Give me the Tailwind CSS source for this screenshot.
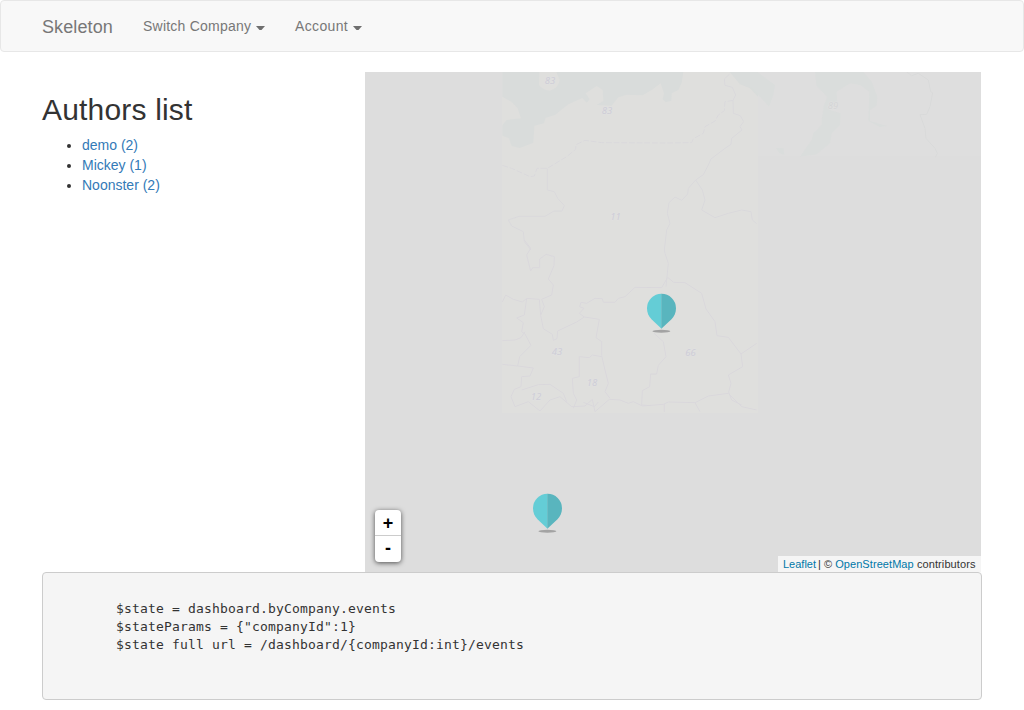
<!DOCTYPE html>
<html lang="en">
<head>
<meta charset="utf-8">
<title>Skeleton</title>
<script src="https://cdn.jsdelivr.net/npm/@tailwindcss/browser@4"></script>
</head>
<body class="h-[710px] overflow-hidden bg-white font-['Liberation_Sans',Arial,sans-serif] text-sm leading-5 text-[#333]">
<nav class="flex h-[52px] items-center rounded border border-[#e7e7e7] bg-[#f8f8f8] pl-[41px] text-[#777]">
  <a class="w-[101px] pt-0.5 text-lg tracking-[0.1px] whitespace-nowrap">Skeleton</a>
  <a class="flex w-[152px] items-center whitespace-nowrap"><span class="tracking-[0.22px]">Switch Company</span><svg class="mt-1 ml-[5px] h-[5px] w-[9px]" viewBox="0 0 9 5"><path d="M0 0H9L5.500 4H3.500Z" fill="#6f6f6f"/></svg></a>
  <a class="flex items-center whitespace-nowrap"><span class="tracking-[0.35px]">Account</span><svg class="mt-1 ml-[5px] h-[5px] w-[9px]" viewBox="0 0 9 5"><path d="M0 0H9L5.500 4H3.500Z" fill="#6f6f6f"/></svg></a>
</nav>
<main class="mx-[42px] mt-5 w-[940px]">
  <div class="flex">
    <section class="w-[323px]">
      <h1 class="mt-5 mb-2 text-[30px] leading-[35px] tracking-[0.18px] whitespace-nowrap">Authors list</h1>
      <ul class="list-disc pl-10 text-[#333]">
        <li><a class="text-[#337ab7]">demo (2)</a></li>
        <li><a class="text-[#337ab7]">Mickey (1)</a></li>
        <li><a class="text-[#337ab7]">Noonster (2)</a></li>
      </ul>
    </section>
    <section class="relative h-[500px] w-[616px] overflow-hidden bg-[#ddd]">
      <svg class="block h-[500px] w-[616px]" viewBox="365 72 616 500">
        <rect x="757" y="72" width="224" height="84.500" fill="#dedede"/>
        <rect x="502" y="72" width="256" height="341" fill="#dfdfdd"/>
        <g transform="translate(495 70) scale(.33333)" fill="none" stroke="#dad9dc" stroke-width="3" stroke-linejoin="round">
          <path fill="#d9dcdb" stroke="none" d="M22 6H133L132 45Q145 62 165 62Q190 55 194 30L184 6H565L560 38L550 60L530 70L529 92L512 97L503 88L507 70L497 40L470 60L443 76L395 74L370 82L350 107L305 105L325 93L323 60L305 48L272 70L284 88L275 98L262 84L220 103L180 135L152 143L147 160L118 167L115 218L75 234L50 228L42 205L22 197V166L35 150L78 145L68 115L50 96L22 80Z"/>
          <path fill="#d9dcdb" stroke="none" d="M704 6H789V80L765 55L735 43Z"/>
          <path d="M22 286L50 295L105 320L118 318L126 295H157L215 260L242 238L243 224L270 211L320 218L515 219L590 218L595 206L625 190L630 170L660 153L670 135L688 122L690 95L716 91" stroke-dasharray="18 5"/>
          <path d="M704 12L688 27L690 46L712 52L722 75L714 91L715 130L736 137L746 155L735 170L741 180L710 205L708 223L690 235L648 267L640 285L625 314L602 330L580 355L578 372L560 391L540 381L522 398L517 430L525 460L515 480L508 540L510 550L520 580L513 650"/>
          <path d="M602 330L622 360L630 390L620 420L660 443L700 430L740 420L768 425L772 450L785 461M157 295V360L178 365L188 385L208 407L201 423L177 423L150 439L72 439L40 450L50 468L85 485L88 515L108 540"/>
        </g>
        <g transform="translate(495 240) scale(.33333)" fill="none" stroke="#dad8dc" stroke-width="3" stroke-linejoin="round">
          <path d="M88 0L107 25L95 45L107 93L113 83H134V57L153 43L178 50L177 77L160 117L175 135L170 165L140 178L148 200L137 226L145 266L172 283L175 301L186 296L188 273L245 246L268 231L253 220L267 205L254 200L258 187L275 190L300 175L322 176L325 187H360L370 175L390 170L420 142L500 143L518 112L536 127L570 128L620 160L633 207L660 245L666 287L700 292L738 342L785 310"/>
          <path d="M22 186L32 165L55 178L82 186L95 175L133 178L137 226M95 175L88 225L65 234L85 248L80 275L90 282L108 316L74 350L68 378L22 373M90 275L78 293L60 300L22 302M68 378L115 384L105 408L80 410L78 440L58 448L48 470L60 500L100 485L135 513L165 480L195 470L230 500L270 498L292 478L300 515L343 478L375 480L400 490L415 485L442 498L505 493L520 486L600 488L640 468L700 460L740 500L785 510"/>
          <path d="M268 231L313 238L303 293L320 305L320 347L330 390L340 430L330 455L345 475M320 350L292 345L283 353L253 350L253 410L232 415L235 460L245 480L235 505M80 450L130 434L165 433L205 460L215 485M477 280L505 305L513 350L490 376L485 402L467 402L464 440L442 452L440 495L468 497M508 492V516M738 342L743 380L700 405L708 430L701 456L710 480L740 495M600 488L615 515M265 487L298 500L310 486"/>
        </g>
        <g transform="translate(750 70) scale(.33333)" fill="none" stroke="#d9dada" stroke-width="3">
          <path fill="#dadddc" stroke="none" d="M0 6H22L75 45L70 75L57 110L30 80L0 50ZM195 6H340L365 35L382 80L380 107L360 120V153L410 168L390 171L355 153L358 65L330 45L300 40L260 65L262 98L240 120L272 130L270 165L245 190L240 220L200 253L150 260L185 210L190 190L215 165V150L222 105L232 80L200 48ZM78 234L100 235L103 254L88 250Z"/>
          <path d="M470 6L485 17L505 10L535 30L542 65L548 68L540 110L530 133L510 134L525 175L528 205L555 235L562 250L556 262"/>
        </g>
        <g font-family="'Noto Sans',sans-serif" font-style="italic" font-size="9.500" fill="#cecdd7" stroke="#e1e1e1" stroke-width="1.200" paint-order="stroke" text-anchor="middle">
          <text x="550" y="83.500">83</text><text x="607" y="113.500">83</text><text x="615.500" y="220">11</text><text x="557" y="354.500">43</text><text x="690.500" y="355.500">66</text><text x="592" y="386">18</text><text x="536" y="400">12</text><text x="833" y="109" fill="#d4d5d6">89</text>
        </g>
        <g id="pin">
          <ellipse cx="661.400" cy="331.300" rx="9" ry="1.500" fill="#a3a3a3"/>
          <path fill="#64cdd6" d="M661.500 293.800A14.500 14.500 0 0 0 647 308.300C647 313 648.800 316.500 651.500 319.300L661.500 328.800Z"/>
          <path fill="#59b5be" d="M661.300 293.800A14.500 14.500 0 0 1 676 308.300C676 313 674.200 316.500 671.500 319.300L661.300 328.800Z"/>
        </g>
        <use href="#pin" x="-114" y="200"/>
      </svg>
      <div class="absolute bottom-2.5 left-2.5 w-[26px] overflow-hidden rounded bg-white text-center text-lg font-bold text-black shadow-[0_1px_5px_rgba(0,0,0,0.65)]">
        <div class="h-[26px] border-b border-[#ccc] leading-[26px]">+</div>
        <div class="h-[26px] leading-[24px]">-</div>
      </div>
      <div class="absolute right-0 bottom-0 h-4 w-[203px] bg-[#f5f5f5] pl-[5px] text-[11px] leading-4 whitespace-nowrap"><span class="text-[#0078a8]">Leaflet</span><span class="-ml-px"> | © </span><span class="text-[#0078a8] tracking-[0.07px]">OpenStreetMap</span><span class="tracking-[0.1px]"> contributors</span></div>
    </section>
  </div>
  <pre class="h-32 rounded border border-[#ccc] bg-[#f5f5f5] pt-[27px] pl-[73px] font-['DejaVu_Sans_Mono',monospace] text-[13px] leading-[18px] tracking-[0.173px]">$state = dashboard.byCompany.events
$stateParams = {"companyId":1}
$state full url = /dashboard/{companyId:int}/events</pre>
</main>
</body>
</html>
